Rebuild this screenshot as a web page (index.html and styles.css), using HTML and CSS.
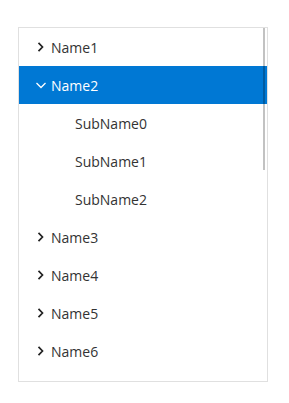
FILE: index.html
```html
<!DOCTYPE html>
<html lang="en">
<head>
  <meta charset="UTF-8">
  <title>Tree View</title>
  <link rel="stylesheet" href="styles.css">
</head>
<body>

  <div class="tree">
    <div class="tree-list">
      <div class="tree-item">
        <span class="chevron"><svg width="10" height="10" viewBox="0 0 10 10"><path d="M2.5 0.8 L6.5 5 L2.5 9.2" /></svg></span>
        <span class="label">Name1</span>
      </div>
      <div class="tree-item selected">
        <span class="chevron"><svg width="10" height="10" viewBox="0 0 10 10"><path d="M0.5 3 L5 7.5 L9.5 3" /></svg></span>
        <span class="label">Name2</span>
      </div>
      <div class="tree-item child"><span class="label">SubName0</span></div>
      <div class="tree-item child"><span class="label">SubName1</span></div>
      <div class="tree-item child"><span class="label">SubName2</span></div>
      <div class="tree-item">
        <span class="chevron"><svg width="10" height="10" viewBox="0 0 10 10"><path d="M2.5 0.8 L6.5 5 L2.5 9.2" /></svg></span>
        <span class="label">Name3</span>
      </div>
      <div class="tree-item">
        <span class="chevron"><svg width="10" height="10" viewBox="0 0 10 10"><path d="M2.5 0.8 L6.5 5 L2.5 9.2" /></svg></span>
        <span class="label">Name4</span>
      </div>
      <div class="tree-item">
        <span class="chevron"><svg width="10" height="10" viewBox="0 0 10 10"><path d="M2.5 0.8 L6.5 5 L2.5 9.2" /></svg></span>
        <span class="label">Name5</span>
      </div>
      <div class="tree-item">
        <span class="chevron"><svg width="10" height="10" viewBox="0 0 10 10"><path d="M2.5 0.8 L6.5 5 L2.5 9.2" /></svg></span>
        <span class="label">Name6</span>
      </div>
    </div>
    <div class="scrollbar"></div>
  </div>

</body>
</html>
```

FILE: styles.css
```css
* {
  box-sizing: border-box;
}

body {
  margin: 0;
  padding: 27px 0 0 18px;
  background: #fff;
  font-family: 'Open Sans', sans-serif;
}

.tree {
  position: relative;
  width: 250px;
  height: 355px;
  border: 1px solid #e0e0e0;
}

.tree-list {
  display: flex;
  flex-direction: column;
}

.tree-item {
  display: flex;
  align-items: center;
  height: 38px;
  padding-left: 15px;
  font-size: 14px;
  color: #333;
}

.tree-item.child {
  padding-left: 56px;
}

.tree-item.selected {
  background: #0078d4;
  color: #fff;
}

.chevron {
  display: flex;
  width: 15px;
  margin-left: 2px;
}

.chevron svg path {
  fill: none;
  stroke: #222;
  stroke-width: 1.7;
}

.selected .chevron svg path {
  stroke: #fff;
  stroke-width: 1.3;
}

.scrollbar {
  position: absolute;
  top: 0;
  right: 2px;
  width: 2px;
  height: 142px;
  background: rgba(0, 0, 0, 0.24);
}
```
